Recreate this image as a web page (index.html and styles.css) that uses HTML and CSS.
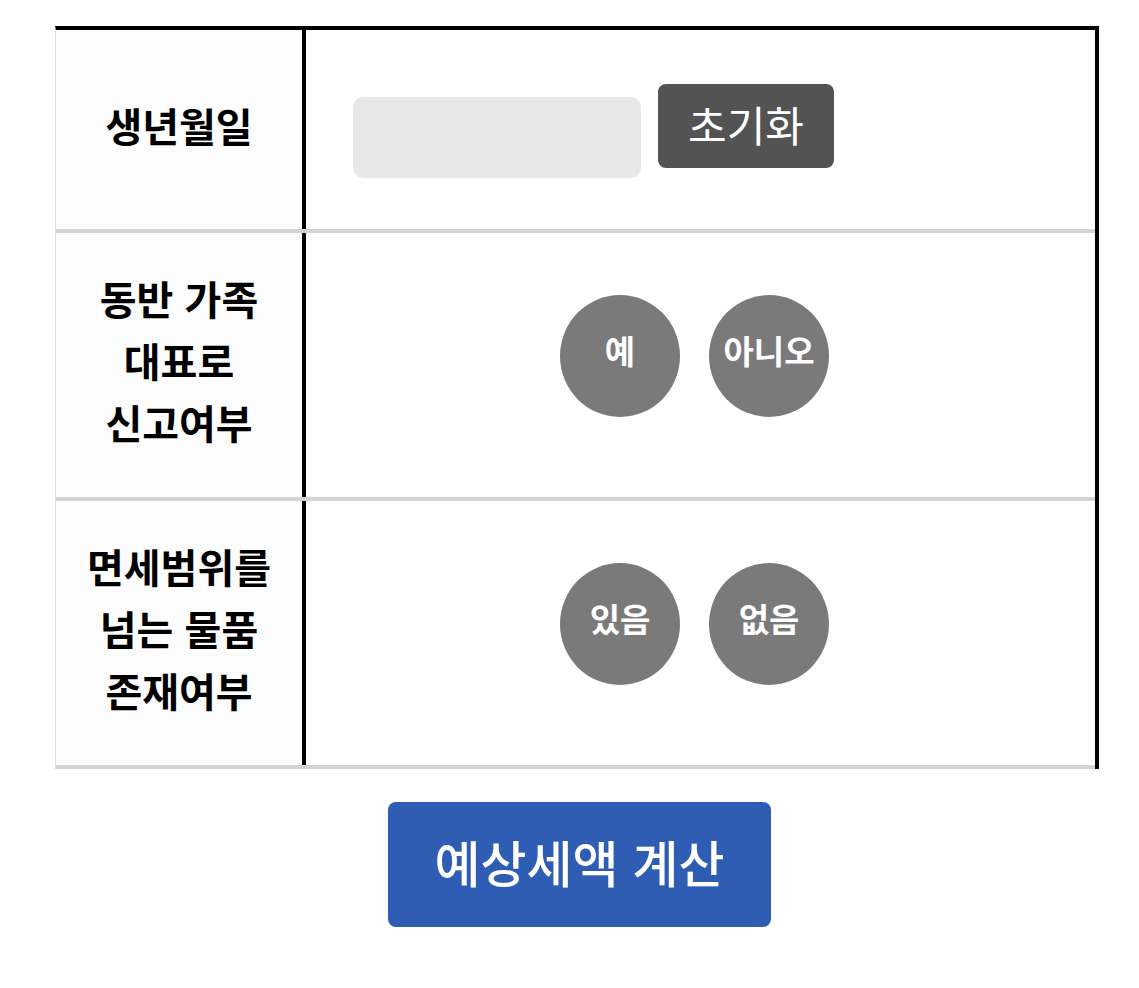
FILE: index.html
```html
<!DOCTYPE html>
<html lang="ko">
<head>
    <meta charset="UTF-8">
    <title>예상세액 계산</title>
    <link rel="stylesheet" href="styles.css">
</head>
<body>
<div class="wrap">
    <div class="form">
        <div class="row">
            <div class="label">생년월일</div>
            <div class="field field-left">
                <input type="text" class="birth" id="birth"/>
                <button class="reset" id="reset">초기화</button>
            </div>
        </div>
        <div class="row">
            <div class="label">동반 가족<br>대표로<br>신고여부</div>
            <div class="field">
                <button class="circle">예</button>
                <button class="circle">아니오</button>
            </div>
        </div>
        <div class="row">
            <div class="label">면세범위를<br>넘는 물품<br>존재여부</div>
            <div class="field">
                <button class="circle">있음</button>
                <button class="circle">없음</button>
            </div>
        </div>
    </div>
    <div class="actions">
        <button class="calc" id="calc">예상세액 계산</button>
    </div>
</div>
</body>
</html>
```

FILE: styles.css
```css
body {
    margin: 0;
    background-color: #fff;
    font-family: "Noto Sans CJK KR", "Noto Sans", sans-serif;
    color: #000;
}

.wrap {
    width: 1044px;
    padding: 26px 0 0 55px;
}

.form {
    border-top: 4px solid #000;
    border-right: 4px solid #000;
    border-left: 1px solid #ddd;
}

.row {
    display: grid;
    grid-template-columns: 250px 1fr;
    border-bottom: 4px solid #d3d3d3;
    min-height: 199px;
}

.label {
    background-color: #fcfcfc;
    border-right: 4px solid #000;
    padding: 34px 0 44px;
    font-size: 40px;
    font-weight: 700;
    line-height: 62px;
    text-align: center;
    display: flex;
    align-items: center;
    justify-content: center;
}

.field {
    display: flex;
    align-items: center;
    justify-content: center;
    gap: 29px;
    padding: 0 12px 18px 0;
}

.field-left {
    justify-content: flex-start;
    align-items: flex-start;
    gap: 17px;
    padding: 54px 0 0 47px;
}

.birth {
    width: 288px;
    height: 81px;
    margin-top: 13px;
    border: none;
    border-radius: 10px;
    background-color: #e8e8e8;
    box-sizing: border-box;
}

.reset {
    width: 176px;
    height: 84px;
    border: none;
    border-radius: 8px;
    background-color: #535353;
    color: #fff;
    font-family: inherit;
    font-size: 42px;
    font-weight: 400;
    padding: 0 0 6px;
}

.circle {
    width: 120px;
    height: 122px;
    border: none;
    border-radius: 50%;
    background-color: #7a7a7a;
    color: #fff;
    font-family: inherit;
    font-size: 33px;
    font-weight: 700;
    padding: 0 0 12px;
}

.actions {
    display: flex;
    justify-content: center;
    padding: 33px 0 0 5px;
}

.calc {
    width: 383px;
    height: 125px;
    border: none;
    border-radius: 8px;
    background-color: #2f5db3;
    color: #fff;
    font-family: inherit;
    font-size: 50px;
    font-weight: 500;
    padding: 0 0 8px;
}
```
